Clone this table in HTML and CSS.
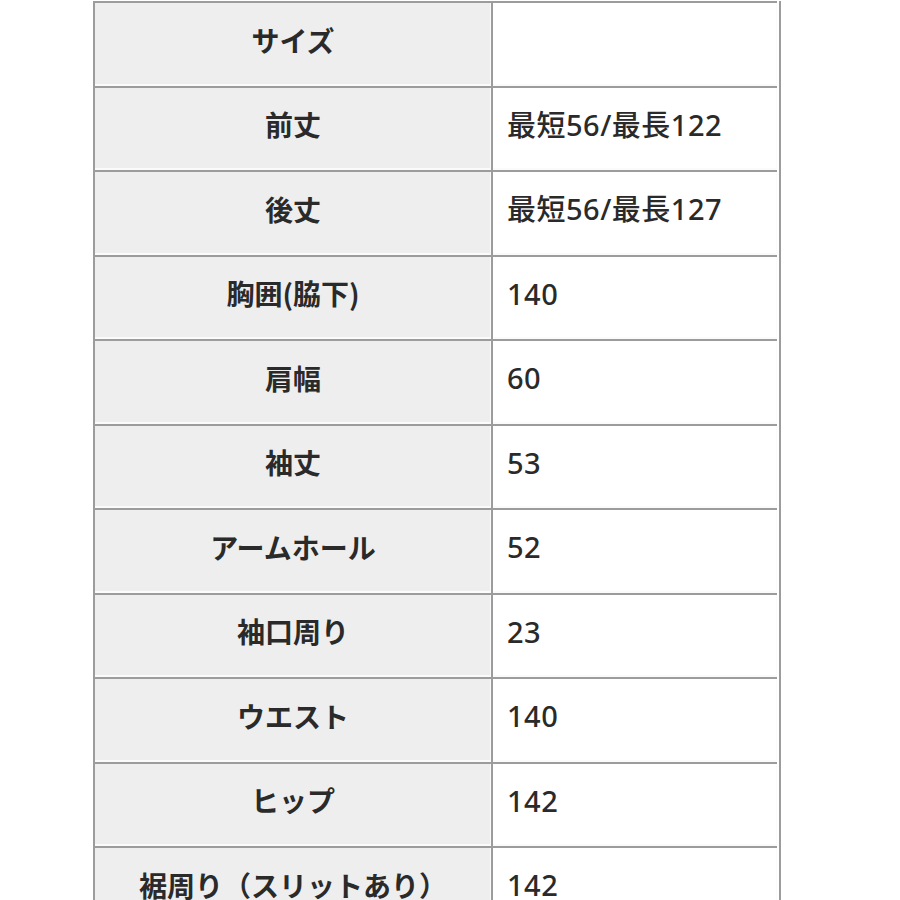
FILE: index.html
```html
<!DOCTYPE html>
<html lang="ja">
<head>
<meta charset="utf-8">
<link rel="stylesheet" href="styles.css">
</head>
<body>
<div class="sheet">
  <div class="grid">
    <div class="k">サイズ</div><div class="v"></div>
    <div class="k">前丈</div><div class="v">最短56/最長122</div>
    <div class="k">後丈</div><div class="v">最短56/最長127</div>
    <div class="k">胸囲(脇下)</div><div class="v">140</div>
    <div class="k">肩幅</div><div class="v">60</div>
    <div class="k">袖丈</div><div class="v">53</div>
    <div class="k">アームホール</div><div class="v">52</div>
    <div class="k">袖口周り</div><div class="v">23</div>
    <div class="k">ウエスト</div><div class="v">140</div>
    <div class="k">ヒップ</div><div class="v">142</div>
    <div class="k">裾周り（スリットあり）</div><div class="v">142</div>
  </div>
</div>
</body>
</html>
```
FILE: styles.css
```css
html, body {
  margin: 0;
  padding: 0;
  background: #ffffff;
}
.sheet {
  width: 900px;
  height: 900px;
  overflow: hidden;
  padding: 1px 0 0 93px;
  box-sizing: border-box;
}
.grid {
  display: grid;
  grid-template-columns: 398px 286px;
  grid-auto-rows: 84.5px;
  width: 686px;
  border-right: 2px solid #9c9c9c;
  border-bottom: 2px solid #9c9c9c;
  color: #2a2a2a;
}
.k, .v {
  border-top: 2px solid #9c9c9c;
  border-left: 2px solid #9c9c9c;
  box-shadow: inset -1px -2px 0 #fbfbfb;
  display: flex;
  align-items: center;
  box-sizing: border-box;
  padding-bottom: 7px;
  line-height: 1.2;
}
.k {
  background: #eeeeee;
  justify-content: center;
  font-family: "Noto Sans CJK JP", "Noto Sans", sans-serif;
  font-size: 28px;
  font-weight: 700;
}
.v {
  background: #ffffff;
  padding-left: 14px;
  font-family: "Noto Sans", "Noto Sans CJK JP", sans-serif;
  font-size: 29px;
  font-weight: 500;
  letter-spacing: 0.5px;
}
```
